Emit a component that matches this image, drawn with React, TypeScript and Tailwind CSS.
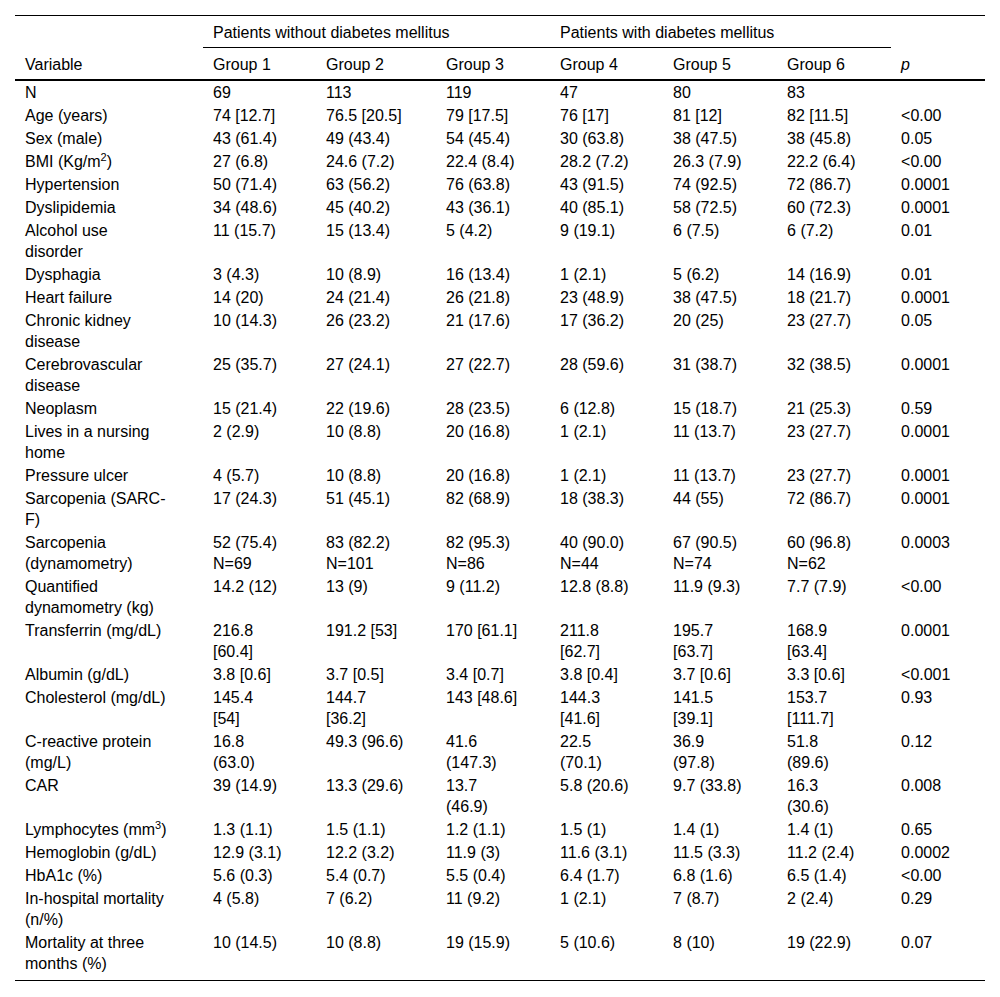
import { ReactNode } from "react"

type Row = { label: ReactNode; cells: string[]; p: string }

// "\n" marks where the original table wraps a cell
const rows: Row[] = [
  { label: "N", cells: ["69", "113", "119", "47", "80", "83"], p: "" },
  { label: "Age (years)", cells: ["74 [12.7]", "76.5 [20.5]", "79 [17.5]", "76 [17]", "81 [12]", "82 [11.5]"], p: "<0.00" },
  { label: "Sex (male)", cells: ["43 (61.4)", "49 (43.4)", "54 (45.4)", "30 (63.8)", "38 (47.5)", "38 (45.8)"], p: "0.05" },
  {
    label: (
      <>
        BMI (Kg/m<sup className="text-[11px] relative -top-[6px] align-baseline">2</sup>)
      </>
    ),
    cells: ["27 (6.8)", "24.6 (7.2)", "22.4 (8.4)", "28.2 (7.2)", "26.3 (7.9)", "22.2 (6.4)"],
    p: "<0.00",
  },
  { label: "Hypertension", cells: ["50 (71.4)", "63 (56.2)", "76 (63.8)", "43 (91.5)", "74 (92.5)", "72 (86.7)"], p: "0.0001" },
  { label: "Dyslipidemia", cells: ["34 (48.6)", "45 (40.2)", "43 (36.1)", "40 (85.1)", "58 (72.5)", "60 (72.3)"], p: "0.0001" },
  { label: "Alcohol use\ndisorder", cells: ["11 (15.7)", "15 (13.4)", "5 (4.2)", "9 (19.1)", "6 (7.5)", "6 (7.2)"], p: "0.01" },
  { label: "Dysphagia", cells: ["3 (4.3)", "10 (8.9)", "16 (13.4)", "1 (2.1)", "5 (6.2)", "14 (16.9)"], p: "0.01" },
  { label: "Heart failure", cells: ["14 (20)", "24 (21.4)", "26 (21.8)", "23 (48.9)", "38 (47.5)", "18 (21.7)"], p: "0.0001" },
  { label: "Chronic kidney\ndisease", cells: ["10 (14.3)", "26 (23.2)", "21 (17.6)", "17 (36.2)", "20 (25)", "23 (27.7)"], p: "0.05" },
  { label: "Cerebrovascular\ndisease", cells: ["25 (35.7)", "27 (24.1)", "27 (22.7)", "28 (59.6)", "31 (38.7)", "32 (38.5)"], p: "0.0001" },
  { label: "Neoplasm", cells: ["15 (21.4)", "22 (19.6)", "28 (23.5)", "6 (12.8)", "15 (18.7)", "21 (25.3)"], p: "0.59" },
  { label: "Lives in a nursing\nhome", cells: ["2 (2.9)", "10 (8.8)", "20 (16.8)", "1 (2.1)", "11 (13.7)", "23 (27.7)"], p: "0.0001" },
  { label: "Pressure ulcer", cells: ["4 (5.7)", "10 (8.8)", "20 (16.8)", "1 (2.1)", "11 (13.7)", "23 (27.7)"], p: "0.0001" },
  { label: "Sarcopenia (SARC-\nF)", cells: ["17 (24.3)", "51 (45.1)", "82 (68.9)", "18 (38.3)", "44 (55)", "72 (86.7)"], p: "0.0001" },
  {
    label: "Sarcopenia\n(dynamometry)",
    cells: ["52 (75.4)\nN=69", "83 (82.2)\nN=101", "82 (95.3)\nN=86", "40 (90.0)\nN=44", "67 (90.5)\nN=74", "60 (96.8)\nN=62"],
    p: "0.0003",
  },
  { label: "Quantified\ndynamometry (kg)", cells: ["14.2 (12)", "13 (9)", "9 (11.2)", "12.8 (8.8)", "11.9 (9.3)", "7.7 (7.9)"], p: "<0.00" },
  {
    label: "Transferrin (mg/dL)",
    cells: ["216.8\n[60.4]", "191.2 [53]", "170 [61.1]", "211.8\n[62.7]", "195.7\n[63.7]", "168.9\n[63.4]"],
    p: "0.0001",
  },
  { label: "Albumin (g/dL)", cells: ["3.8 [0.6]", "3.7 [0.5]", "3.4 [0.7]", "3.8 [0.4]", "3.7 [0.6]", "3.3 [0.6]"], p: "<0.001" },
  {
    label: "Cholesterol (mg/dL)",
    cells: ["145.4\n[54]", "144.7\n[36.2]", "143 [48.6]", "144.3\n[41.6]", "141.5\n[39.1]", "153.7\n[111.7]"],
    p: "0.93",
  },
  {
    label: "C-reactive protein\n(mg/L)",
    cells: ["16.8\n(63.0)", "49.3 (96.6)", "41.6\n(147.3)", "22.5\n(70.1)", "36.9\n(97.8)", "51.8\n(89.6)"],
    p: "0.12",
  },
  { label: "CAR", cells: ["39 (14.9)", "13.3 (29.6)", "13.7\n(46.9)", "5.8 (20.6)", "9.7 (33.8)", "16.3\n(30.6)"], p: "0.008" },
  {
    label: (
      <>
        Lymphocytes (mm<sup className="text-[11px] relative -top-[6px] align-baseline">3</sup>)
      </>
    ),
    cells: ["1.3 (1.1)", "1.5 (1.1)", "1.2 (1.1)", "1.5 (1)", "1.4 (1)", "1.4 (1)"],
    p: "0.65",
  },
  { label: "Hemoglobin (g/dL)", cells: ["12.9 (3.1)", "12.2 (3.2)", "11.9 (3)", "11.6 (3.1)", "11.5 (3.3)", "11.2 (2.4)"], p: "0.0002" },
  { label: "HbA1c (%)", cells: ["5.6 (0.3)", "5.4 (0.7)", "5.5 (0.4)", "6.4 (1.7)", "6.8 (1.6)", "6.5 (1.4)"], p: "<0.00" },
  { label: "In-hospital mortality\n(n/%)", cells: ["4 (5.8)", "7 (6.2)", "11 (9.2)", "1 (2.1)", "7 (8.7)", "2 (2.4)"], p: "0.29" },
  { label: "Mortality at three\nmonths (%)", cells: ["10 (14.5)", "10 (8.8)", "19 (15.9)", "5 (10.6)", "8 (10)", "19 (22.9)"], p: "0.07" },
]

const colWidths = ["w-[188px]", "w-[113px]", "w-[120px]", "w-[114px]", "w-[113px]", "w-[114px]", "w-[114px]", "w-[94px]"]

export default function App() {
  const td = "px-[10px] py-[1px] align-top whitespace-pre-line"
  const thTop = "px-[10px] pt-[6px] pb-[4px] text-left font-normal"

  return (
    <div
      className="bg-white text-black text-[16px] leading-[21px] min-h-[997px] pt-[15px]"
      style={{ fontFamily: '"Liberation Sans", Arial, sans-serif' }}
    >
      <div className="mx-[15px] border-y border-black pb-[5px]">
        <table className="table-fixed w-[970px] border-separate border-spacing-0">
          <colgroup>
            {colWidths.map((w, i) => (
              <col key={i} className={w} />
            ))}
          </colgroup>
          <thead>
            <tr>
              <th rowSpan={2} className={`${thTop} align-bottom border-b-2 border-black`}>
                Variable
              </th>
              <th colSpan={3} className={`${thTop} border-b border-black`}>
                Patients without diabetes mellitus
              </th>
              <th colSpan={3} className={`${thTop} border-b border-black`}>
                Patients with diabetes mellitus
              </th>
              <th rowSpan={2} className={`${thTop} align-bottom border-b-2 border-black italic`}>
                p
              </th>
            </tr>
            <tr>
              {[1, 2, 3, 4, 5, 6].map((g) => (
                <th key={g} className={`${thTop} border-b-2 border-black`}>
                  Group {g}
                </th>
              ))}
            </tr>
          </thead>
          <tbody>
            {rows.map((r, i) => (
              <tr key={i}>
                <td className={td}>{r.label}</td>
                {r.cells.map((c, j) => (
                  <td key={j} className={td}>
                    {c}
                  </td>
                ))}
                <td className={td}>{r.p}</td>
              </tr>
            ))}
          </tbody>
        </table>
      </div>
    </div>
  )
}
